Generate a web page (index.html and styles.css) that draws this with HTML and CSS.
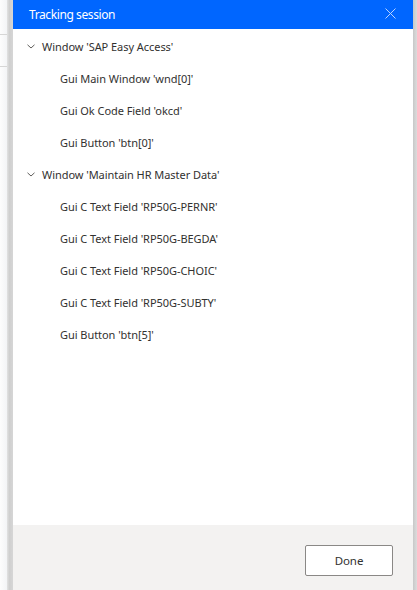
FILE: index.html
```html
<!DOCTYPE html>
<html>
<head>
<meta charset="utf-8">
<link rel="stylesheet" href="styles.css">
</head>
<body>
<div class="screen">
  <div class="app">
    <div class="app-row app-row-top"></div>
    <div class="app-row"></div>
  </div>
  <div class="shade-left"></div>
  <div class="dialog">
    <div class="header">
      <span class="title">Tracking session</span>
      <svg class="close" width="11" height="11" viewBox="0 0 11 11"><path d="M0.5 0.5 L10.5 10.5 M10.5 0.5 L0.5 10.5" stroke="#b9d3ff" stroke-width="1" fill="none"/></svg>
    </div>
    <div class="tree">
      <div class="row group"><svg class="chev" width="8" height="5" viewBox="0 0 8 5"><path d="M0.5 0.8 L4 4 L7.5 0.8" stroke="#605e5c" stroke-width="1" fill="none"/></svg><span>Window 'SAP Easy Access'</span></div>
      <div class="row child">Gui Main Window 'wnd[0]'</div>
      <div class="row child">Gui Ok Code Field 'okcd'</div>
      <div class="row child">Gui Button 'btn[0]'</div>
      <div class="row group"><svg class="chev" width="8" height="5" viewBox="0 0 8 5"><path d="M0.5 0.8 L4 4 L7.5 0.8" stroke="#605e5c" stroke-width="1" fill="none"/></svg><span>Window 'Maintain HR Master Data'</span></div>
      <div class="row child">Gui C Text Field 'RP50G-PERNR'</div>
      <div class="row child">Gui C Text Field 'RP50G-BEGDA'</div>
      <div class="row child">Gui C Text Field 'RP50G-CHOIC'</div>
      <div class="row child">Gui C Text Field 'RP50G-SUBTY'</div>
      <div class="row child">Gui Button 'btn[5]'</div>
    </div>
    <div class="footer">
      <button class="done">Done</button>
    </div>
  </div>
  <div class="shade-right"></div>
</div>
</body>
</html>
```
FILE: styles.css
```css
html, body {
  margin: 0;
  padding: 0;
}
body {
  width: 417px;
  height: 590px;
  overflow: hidden;
  font-family: "Noto Sans", "Open Sans", sans-serif;
  background: #ffffff;
}
.screen {
  display: flex;
  height: 590px;
}
.app {
  width: 7px;
  background: linear-gradient(to right, #fdfdfd, #f3f4f6);
  display: flex;
  flex-direction: column;
}
.app-row {
  height: 31px;
  border-bottom: 1px solid #d6d6d6;
}
.app-row-top {
  height: 34px;
}
.shade-left {
  width: 6px;
  background: linear-gradient(to right, #e2e2e2, #cfcfcf 40%, #d6d6d6);
}
.dialog {
  width: 400px;
  display: flex;
  flex-direction: column;
  background: #ffffff;
}
.header {
  height: 29px;
  background: #0066ff;
  display: flex;
  align-items: center;
  justify-content: space-between;
  padding: 0 17px 0 16px;
}
.title {
  color: #ffffff;
  font-size: 12px;
  letter-spacing: -0.4px;
  margin-top: -1px;
}
.close {
  display: block;
  margin-top: -2px;
}
.tree {
  flex: 1;
  padding-top: 1px;
  display: flex;
  flex-direction: column;
}
.row {
  height: 32px;
  display: flex;
  align-items: center;
  font-size: 11px;
  letter-spacing: -0.05px;
  color: #323130;
  white-space: nowrap;
}
.group {
  padding-left: 14px;
}
.chev {
  display: block;
  margin-right: 7px;
}
.child {
  padding-left: 47px;
}
.footer {
  height: 65px;
  background: #f3f2f1;
  display: flex;
  justify-content: flex-end;
  align-items: flex-start;
  padding: 20px 20px 0 0;
  box-sizing: border-box;
}
.done {
  width: 88px;
  height: 31px;
  background: #ffffff;
  border: 1px solid #8a8886;
  border-radius: 2px;
  font-family: "Noto Sans", "Open Sans", sans-serif;
  font-size: 11.5px;
  letter-spacing: -0.1px;
  color: #323130;
  padding: 0;
}
.shade-right {
  width: 4px;
  background: linear-gradient(to right, #c8c8c8, #dcdcdc);
}
```
